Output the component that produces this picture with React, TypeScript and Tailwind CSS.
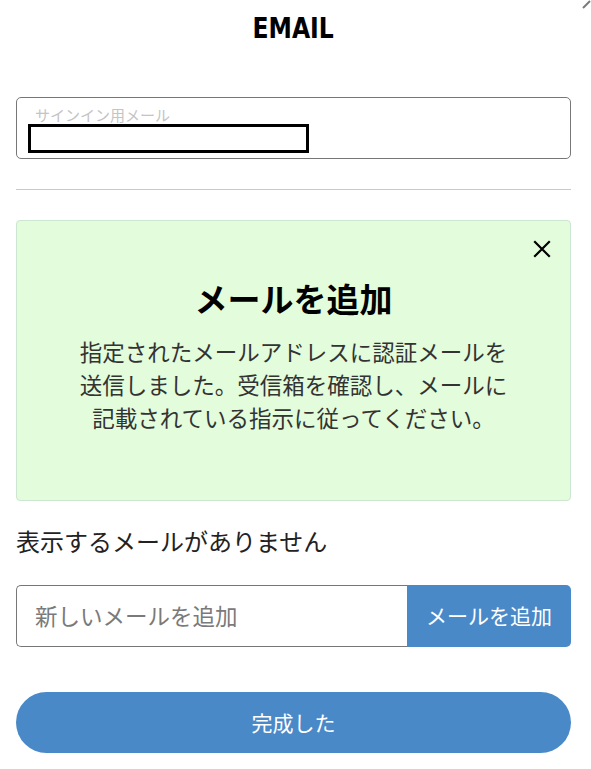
const jp = "font-['Noto_Sans_CJK_JP','Noto_Sans',sans-serif]";

export default function App() {
  return (
    <div className={`relative min-h-screen bg-white pl-4 pr-5 ${jp}`}>
      <svg
        className="absolute right-0 top-0"
        width="10"
        height="10"
        viewBox="0 0 10 10"
      >
        <line x1="2" y1="8" x2="9" y2="1" stroke="#7a7a7a" strokeWidth="2" />
      </svg>

      <h1 className="h-[56px] text-center font-['Liberation_Sans_Narrow','DejaVu_Sans_Condensed',sans-serif] text-[29px] font-bold leading-[56px] text-black">
        <span className="inline-block scale-x-[0.9]">EMAIL</span>
      </h1>

      <div className="mt-[41px] h-[62px] rounded-[5px] border border-[#777777] pt-[9px]">
        <div className="pl-[18px] text-[15px] leading-[16px] text-[#c4c4c4]">
          サインイン用メール
        </div>
        <div className="ml-[11px] mt-[1px] h-[29px] w-[281px] border-[3px] border-black" />
      </div>

      <div className="mt-[30px] h-px bg-[#cacaca]" />

      <div className="relative mt-[30px] h-[281px] rounded-[4px] border border-[#cde6d1] bg-[#e3fcdb] pt-[57px]">
        <button className="absolute right-[19px] top-[19px] text-black">
          <svg width="18" height="18" viewBox="0 0 18 18">
            <path
              d="M2 2L16 16M16 2L2 16"
              stroke="#000"
              strokeWidth="2.2"
              strokeLinecap="square"
            />
          </svg>
        </button>
        <h2 className="text-center text-[33px] font-bold leading-[40px] text-black">
          メールを追加
        </h2>
        <p className="mt-[17px] text-center text-[22.5px] leading-[33px] text-[#333333]">
          <span className="block">指定されたメールアドレスに認証メールを</span>
          <span className="block">送信しました。受信箱を確認し、メールに</span>
          <span className="block">記載されている指示に従ってください。</span>
        </p>
      </div>

      <p className="mt-[23px] text-[24px] leading-[34px] text-[#222222]">
        表示するメールがありません
      </p>

      <div className="mt-[27px] flex h-[62px]">
        <input
          placeholder="新しいメールを追加"
          className="min-w-0 flex-1 rounded-l-[5px] border border-r-0 border-[#777777] pl-[18px] text-[22.5px] text-[#333] outline-none placeholder:text-[#7a7a7a]"
        />
        <button className="w-[164px] rounded-r-[5px] bg-[#4a89c8] text-[21px] text-white">
          メールを追加
        </button>
      </div>

      <button className="mt-[45px] h-[61px] w-full rounded-full bg-[#4a89c8] text-[21px] text-white">
        完成した
      </button>
    </div>
  );
}
